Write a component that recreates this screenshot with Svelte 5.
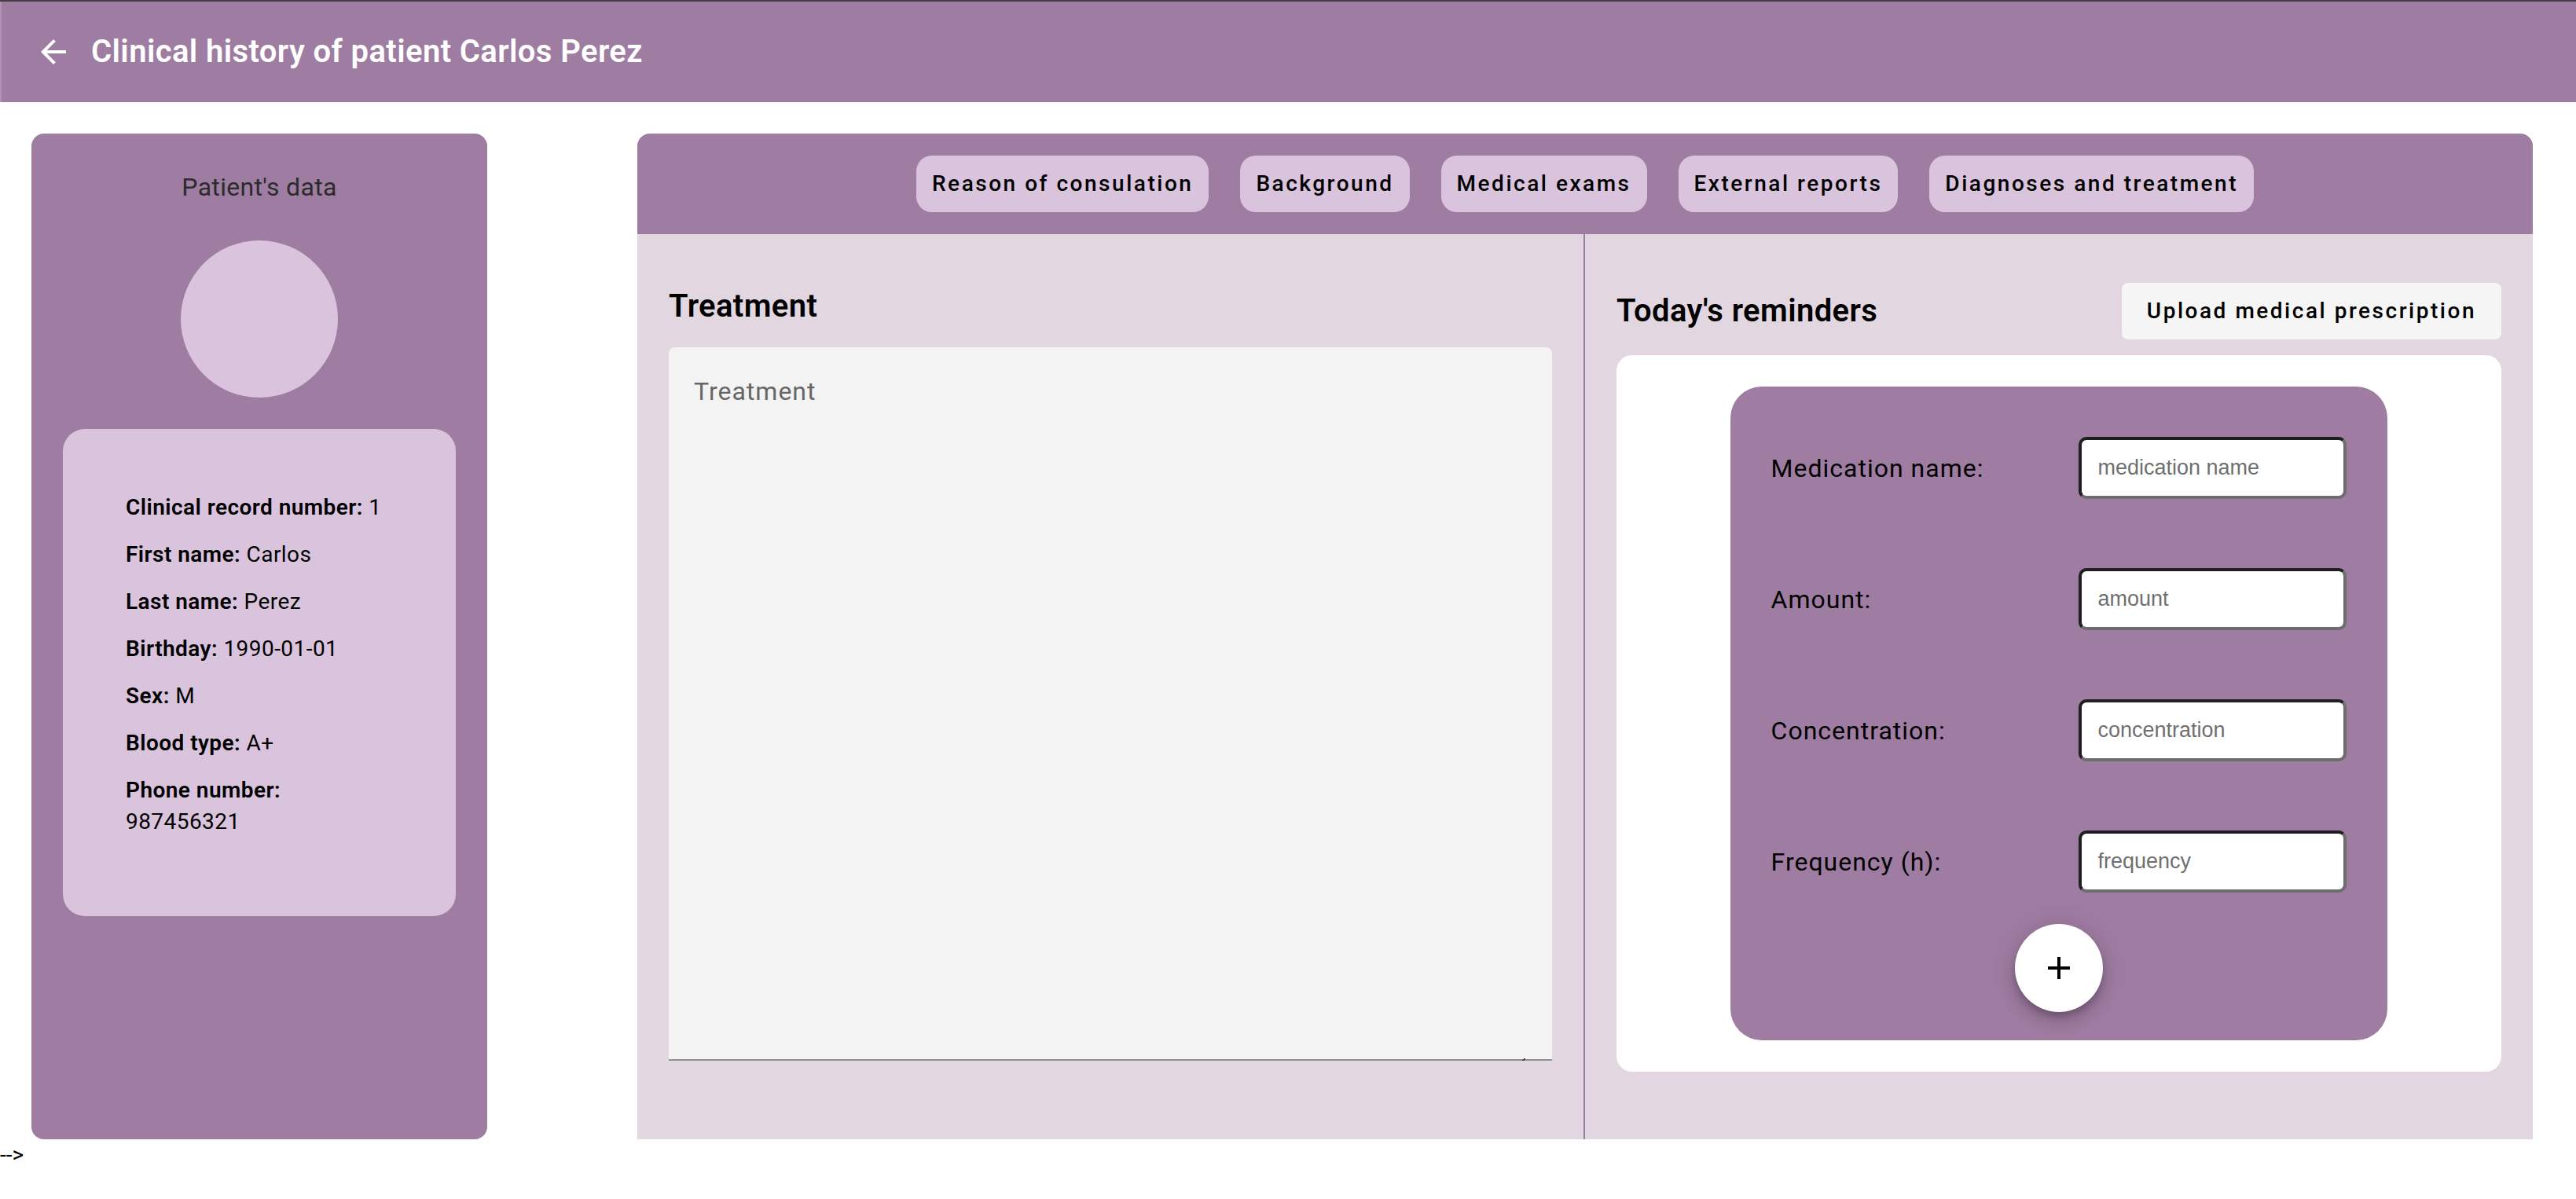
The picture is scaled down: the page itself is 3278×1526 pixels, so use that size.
<script>
  const details = [
    ['Clinical record number:', '1'],
    ['First name:', 'Carlos'],
    ['Last name:', 'Perez'],
    ['Birthday:', '1990-01-01'],
    ['Sex:', 'M'],
    ['Blood type:', 'A+'],
    ['Phone number:', '987456321']
  ];

  const tabs = [
    'Reason of consulation',
    'Background',
    'Medical exams',
    'External reports',
    'Diagnoses and treatment'
  ];

  const fields = [
    { id: 'medication', label: 'Medication name:', hint: 'medication name' },
    { id: 'amount', label: 'Amount:', hint: 'amount' },
    { id: 'concentration', label: 'Concentration:', hint: 'concentration' },
    { id: 'frequency', label: 'Frequency (h):', hint: 'frequency' }
  ];
</script>

<header class="toolbar">
  <button class="back" aria-label="Back">
    <svg viewBox="0 0 24 24" aria-hidden="true">
      <path d="M20 11H7.83l5.59-5.59L12 4l-8 8 8 8 1.41-1.41L7.83 13H20v-2z" />
    </svg>
  </button>
  <h1>Clinical history of patient Carlos Perez</h1>
</header>

<div class="page">
  <aside class="patient">
    <h2>Patient's data</h2>
    <div class="avatar"></div>
    <div class="details">
      {#each details as [name, value]}
        <p><strong>{name}</strong> {value}</p>
      {/each}
    </div>
  </aside>

  <main class="record">
    <nav class="tabs">
      {#each tabs as tab}
        <button class="tab">{tab}</button>
      {/each}
    </nav>

    <div class="columns">
      <section class="treatment">
        <h2><label for="treatment">Treatment</label></h2>
        <div class="note">
          <textarea id="treatment" placeholder="Treatment"></textarea>
          <svg class="grip" viewBox="0 0 4 3" aria-hidden="true">
            <path d="M0 3V2h1V1h1V0h2v2H3v1z" />
          </svg>
        </div>
      </section>

      <section class="reminders">
        <div class="heading">
          <h2>Today's reminders</h2>
          <button class="upload">Upload medical prescription</button>
        </div>
        <div class="card">
          <form class="medication">
            {#each fields as field}
              <div class="row">
                <label for={field.id}>{field.label}</label>
                <input id={field.id} type="text" placeholder={field.hint} />
              </div>
            {/each}
            <button class="add" type="button" aria-label="Add medication">
              <svg viewBox="0 0 24 24" aria-hidden="true">
                <path d="M19 13h-6v6h-2v-6H5v-2h6V5h2v6h6v2z" />
              </svg>
            </button>
          </form>
        </div>
      </section>
    </div>
  </main>
</div>
<div class="stray">--&gt;</div>

<style>
  :global(body) {
    background: #fff;
    color: #000;
    font-family: Roboto, 'Liberation Sans', sans-serif;
    font-size: 28px;
    line-height: 40px;
  }

  h1,
  h2,
  p {
    margin: 0;
  }

  button {
    border: 0;
    padding: 0;
    color: #000;
    font: inherit;
    cursor: pointer;
  }

  .toolbar {
    display: flex;
    align-items: center;
    gap: 24px;
    box-sizing: border-box;
    height: 130px;
    padding: 0 44px;
    border-top: 2px solid #3f3f3f;
    background: #9f7ca2;
    color: #fff;
    box-shadow: inset 2px 0 #af93b2;
  }

  .back {
    display: flex;
    background: none;
  }

  .back svg {
    width: 48px;
    height: 48px;
    fill: #fff;
  }

  h1,
  h2 {
    font-size: 40px;
    font-weight: 600;
    letter-spacing: 0.01em;
    line-height: 64px;
  }

  .page {
    display: flex;
    gap: 191px;
    padding: 40px 55px 0 40px;
  }

  .patient {
    flex: none;
    display: flex;
    flex-direction: column;
    align-items: center;
    gap: 40px;
    box-sizing: border-box;
    width: 580px;
    padding: 40px;
    border-radius: 16px;
    background: #9f7ca2;
  }

  .patient h2 {
    color: #2b2b2b;
    font-size: 32px;
    font-weight: 400;
    line-height: 56px;
  }

  .avatar {
    width: 200px;
    height: 200px;
    border-radius: 50%;
    background: #dac3dd;
  }

  .details {
    align-self: stretch;
    padding: 80px;
    border-radius: 28px;
    background: #dac3dd;
    letter-spacing: 0.016em;
  }

  .details p {
    margin-bottom: 20px;
  }

  .details strong {
    font-weight: 600;
  }

  .record {
    flex: 1;
    min-width: 0;
    overflow: hidden;
    border-radius: 16px 16px 0 0;
    background: #e2d7e0;
  }

  .tabs {
    display: flex;
    justify-content: center;
    gap: 40px;
    padding: 28px 0;
    background: #9f7ca2;
  }

  .tab,
  .upload {
    height: 72px;
    padding: 0 20px;
    border-radius: 20px;
    background: #dac3dd;
    font-weight: 500;
    letter-spacing: 0.09em;
  }

  .upload {
    padding: 0 32px;
    border-radius: 8px;
    background: #f5f5f5;
  }

  .columns {
    display: grid;
    grid-template-columns: 1fr 1fr;
  }

  .treatment {
    display: flex;
    flex-direction: column;
    gap: 20px;
    padding: 60px 40px 100px;
    border-right: 2px solid #9f7ca6;
  }

  .note {
    position: relative;
    flex: 1;
    display: flex;
  }

  textarea {
    flex: 1;
    box-sizing: border-box;
    padding: 28px 32px;
    border: 0;
    border-bottom: 2px solid #909090;
    border-radius: 8px 8px 0 0;
    background: #f3f3f3;
    color: #000;
    font: 32px/56px Roboto, sans-serif;
    letter-spacing: 1px;
    resize: none;
  }

  textarea::placeholder {
    color: #666;
  }

  .grip {
    position: absolute;
    right: 34px;
    bottom: 0;
    width: 4px;
    height: 3px;
    fill: #444;
  }

  .reminders {
    padding: 62px 40px 86px;
  }

  .heading {
    display: flex;
    align-items: center;
    justify-content: space-between;
    margin-bottom: 20px;
  }

  .card {
    padding: 40px;
    border-radius: 20px;
    background: #fff;
  }

  .medication {
    display: flex;
    flex-direction: column;
    gap: 88px;
    box-sizing: border-box;
    width: 80%;
    margin: 0 auto;
    padding: 64px 52px 36px;
    border-radius: 40px;
    background: #9f7ca2;
  }

  .row {
    display: flex;
    align-items: center;
    justify-content: space-between;
  }

  .row label {
    font-size: 32px;
    letter-spacing: 1px;
  }

  input {
    box-sizing: border-box;
    width: 341px;
    height: 79px;
    padding: 20px;
    border: 4px solid;
    border-color: #1f1f1f #6d6d6d #6d6d6d #1f1f1f;
    border-radius: 10px;
    background: #fff;
    color: #000;
    font: 27px 'Liberation Sans', Arial, sans-serif;
  }

  input::placeholder {
    color: #6f6f6f;
  }

  .add {
    display: grid;
    place-items: center;
    align-self: center;
    width: 112px;
    height: 112px;
    margin-top: -48px;
    border-radius: 50%;
    background: #fff;
    box-shadow:
      0 6px 10px -2px rgba(0, 0, 0, 0.2),
      0 12px 20px 0 rgba(0, 0, 0, 0.14),
      0 2px 36px 0 rgba(0, 0, 0, 0.12);
  }

  .add svg {
    width: 48px;
    height: 48px;
  }

  .stray {
    font-weight: 400;
  }
</style>
